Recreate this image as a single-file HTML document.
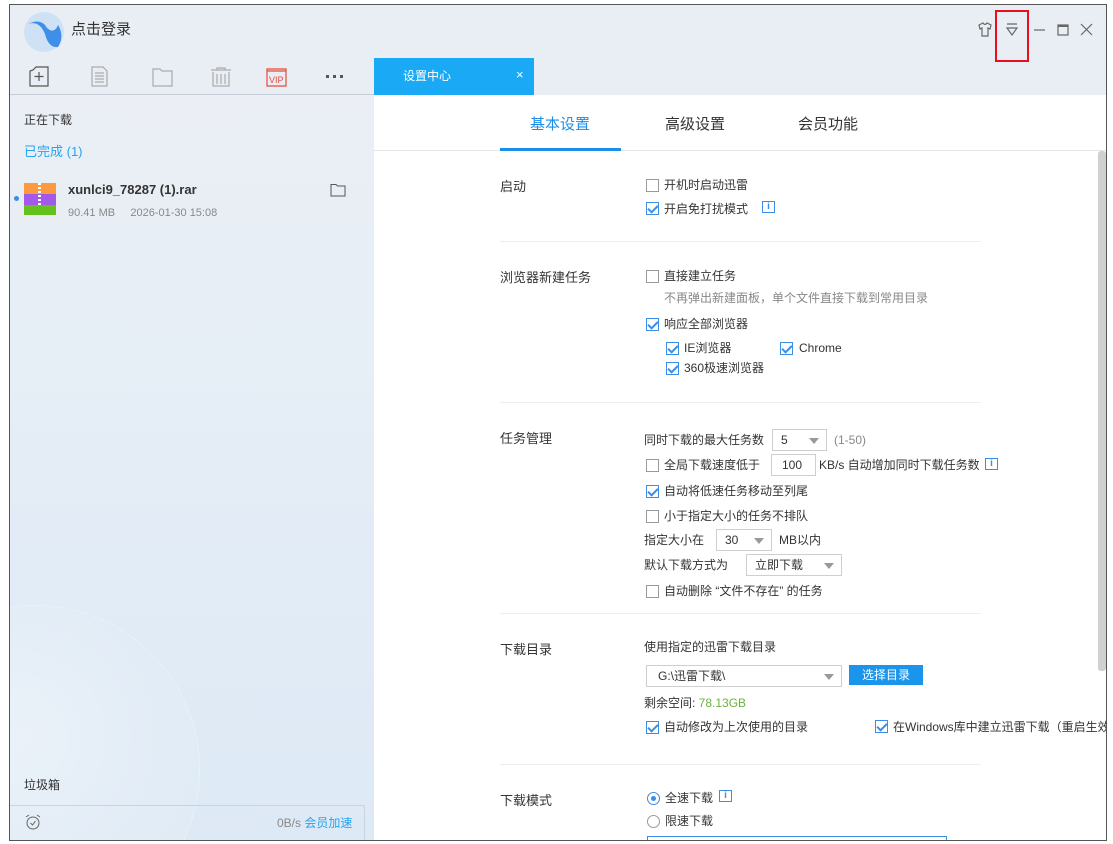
<!DOCTYPE html>
<html><head><meta charset="utf-8"><style>
*{margin:0;padding:0;box-sizing:border-box}
html,body{width:1113px;height:844px;overflow:hidden}
body{background:#fff;position:relative;font-family:"Liberation Sans","Noto Sans CJK SC",sans-serif;font-size:12px;color:#333}
.a{position:absolute;white-space:nowrap;line-height:16px}
.win{position:absolute;left:9px;top:4px;width:1098px;height:837px;border:1px solid #555;background:#fff;overflow:hidden}
.cb{position:absolute;width:13px;height:13px;border:1px solid #9a9a9a;background:#fff}
.cb.on{border-color:#3a8ee6}
.cb.on:after{content:"";position:absolute;left:3px;top:0px;width:4px;height:8px;border:solid #3a8ee6;border-width:0 2px 2px 0;transform:rotate(45deg)}
.sel{position:absolute;border:1px solid #cfcfcf;background:#fff;height:22px;line-height:20px;padding-left:8px}
.sel.dd:after{content:"";position:absolute;right:7px;top:8px;border:5px solid transparent;border-top:6px solid #999;border-bottom:0}
.info{position:absolute;width:13px;height:12px;border:1px solid #3a8ee6;color:#3a8ee6;font-size:10px;line-height:10px;text-align:center;font-weight:bold}
.hr{position:absolute;left:500px;width:481px;height:1px;background:#eee}
.h{position:absolute;font-size:13px;color:#333;line-height:16px}
</style></head><body>
<div class="win">
 <div style="position:absolute;left:0;top:0;width:1098px;height:90px;background:#e9eef4"></div>
 <div style="position:absolute;left:0;top:90px;width:364px;height:747px;background:linear-gradient(180deg,#ebeff5 0%,#e4edf6 50%,#dde9f5 100%)"></div>
 <div style="position:absolute;left:-140px;top:600px;width:330px;height:330px;border-radius:50%;background:radial-gradient(circle at 45% 40%,#eaf1f8,#e0ebf6 70%);border:1px solid #e8f0f8"></div>
 <div style="position:absolute;left:0;top:89px;width:364px;height:1px;background:#c5ccd6"></div>
 <div style="position:absolute;left:14px;top:7px;width:40px;height:40px;border-radius:50%;background:#cfe2f5"></div>
 <svg style="position:absolute;left:14px;top:7px" width="40" height="40"><path d="M4 12 C12 9 18 14 21 22 C23 30 27 36 34 35 C39 28 38 19 34 13 C31 21 25 20 21 13 C16 8 10 9 4 12Z" fill="#3f8ee8"/></svg>
 <div class="a" style="left:61px;top:17px;font-size:15px;color:#333">点击登录</div>
 <svg style="position:absolute;left:966px;top:16px" width="130" height="18" fill="none" stroke="#666" stroke-width="1.2">
  <path d="M3 4 L7 2 Q9 5 11 2 L15 4 L14 8 L12 7 L12 15 L6 15 L6 7 L4 8Z"/>
  <path d="M31 3 H41 M31 7 H41 L36 14 Z"/>
  <path d="M58 9 H69"/>
  <rect x="82" y="4" width="10" height="10"/><path d="M82 5 H92" stroke-width="2"/>
  <path d="M105 3 L116 14 M116 3 L105 14"/>
 </svg>
 <div style="position:absolute;left:985px;top:5px;width:34px;height:52px;border:2px solid #e8101e"></div>
 <svg style="position:absolute;left:18px;top:60px" width="340" height="24" fill="none" stroke-width="1.2">
  <g stroke="#555"><path d="M5 5 L8 2 H20 V21 H2 V6 Z"/><path d="M11 7 V16 M6.5 11.5 H15.5"/></g>
  <g stroke="#aaa"><path d="M64 2 H75 L79 6 V21 H64 Z M67 8 H76 M67 11 H76 M67 14 H76 M67 17 H76"/></g>
  <g stroke="#aaa"><path d="M125 4 H132 L134 6 H144 V21 H125 Z"/></g>
  <g stroke="#aaa"><path d="M183 5 H203 M189 5 V3 H197 V5 M185 7 V21 H201 V7 M189 9 V19 M193 9 V19 M197 9 V19"/></g>
  <g stroke="#e64a3b"><path d="M239 4 H258 V21 H239 Z M239 6 H258"/></g>
  <text x="241" y="18" fill="#e64a3b" font-size="9" stroke="none" font-family="Liberation Sans">VIP</text>
  <g fill="#555" stroke="none"><rect x="298" y="10" width="3" height="3"/><rect x="305" y="10" width="3" height="3"/><rect x="312" y="10" width="3" height="3"/></g>
 </svg>
 <div style="position:absolute;left:364px;top:53px;width:160px;height:37px;background:#19a9f5"></div>
 <div class="a" style="left:393px;top:63px;color:#fff">设置中心</div>
 <div class="a" style="left:506px;top:62px;color:#fff;font-size:13px">×</div>
 <div class="a" style="left:14px;top:107px">正在下载</div>
 <div class="a" style="left:14px;top:139px;color:#26a4f0;font-size:13px">已完成 (1)</div>
 <div style="position:absolute;left:4px;top:191px;width:5px;height:5px;border-radius:50%;background:#3a8ee6"></div>
 <div style="position:absolute;left:14px;top:178px;width:32px;height:11px;background:#fd9a3f"></div>
 <div style="position:absolute;left:14px;top:189px;width:32px;height:11px;background:#a45ae8"></div>
 <div style="position:absolute;left:14px;top:200px;width:32px;height:10px;background:#66c11c"></div>
 <div style="position:absolute;left:28px;top:178px;width:3px;height:22px;background:repeating-linear-gradient(#fff 0 2px,transparent 2px 4px)"></div>
 <div class="a" style="left:58px;top:177px;font-weight:bold;font-size:13px;color:#333">xunlci9_78287 (1).rar</div>
 <div class="a" style="left:58px;top:200px;font-size:11px;color:#888">90.41 MB &nbsp;&nbsp;&nbsp;&nbsp;2026-01-30 15:08</div>
 <svg style="position:absolute;left:320px;top:178px" width="16" height="14" fill="none" stroke="#555"><path d="M1 1.5 H6 L7.5 3 H15 V13 H1 Z"/></svg>
 <div class="a" style="left:14px;top:772px">垃圾箱</div>
 <div style="position:absolute;left:0;top:800px;width:354px;height:1px;background:#c8d4e0"></div>
 <div style="position:absolute;left:354px;top:800px;width:1px;height:37px;background:#c8d4e0"></div>
 <svg style="position:absolute;left:14px;top:808px" width="18" height="18" fill="none" stroke="#666"><circle cx="9" cy="10" r="6"/><path d="M6.5 10 L8.5 12 L11.5 8 M2 4 L5 2 M16 4 L13 2"/></svg>
 <div class="a" style="left:267px;top:810px;color:#888">0B/s <span style="color:#26a4f0">会员加速</span></div>
 <div class="a" style="left:520px;top:112px;font-size:15px;color:#1b8fe8">基本设置</div>
 <div class="a" style="left:655px;top:112px;font-size:15px">高级设置</div>
 <div class="a" style="left:788px;top:112px;font-size:15px">会员功能</div>
 <div style="position:absolute;left:364px;top:145px;width:734px;height:1px;background:#e5e5e5"></div>
 <div style="position:absolute;left:490px;top:143px;width:121px;height:3px;background:#1b8fe8"></div>
 <div style="position:absolute;left:1088px;top:146px;width:8px;height:520px;background:#d0d0d0;border-radius:3px"></div>

 <div style="position:absolute;left:-10px;top:-5px;width:1113px;height:844px">
<div class="h" style="left:500px;top:179px">启动</div>
<div class="cb" style="left:646px;top:179px"></div><div class="a" style="left:664px;top:177px">开机时启动迅雷</div>
<div class="cb on" style="left:646px;top:202px"></div><div class="a" style="left:664px;top:201px">开启免打扰模式</div>
<div class="info" style="left:762px;top:201px">i</div>
<div class="hr" style="top:241px"></div>
<div class="h" style="left:500px;top:270px">浏览器新建任务</div>
<div class="cb" style="left:646px;top:270px"></div><div class="a" style="left:664px;top:268px">直接建立任务</div>
<div class="a" style="left:664px;top:290px;color:#888">不再弹出新建面板，单个文件直接下载到常用目录</div>
<div class="cb on" style="left:646px;top:318px"></div><div class="a" style="left:664px;top:316px">响应全部浏览器</div>
<div class="cb on" style="left:666px;top:342px"></div><div class="a" style="left:684px;top:340px">IE浏览器</div>
<div class="cb on" style="left:780px;top:342px"></div><div class="a" style="left:799px;top:340px">Chrome</div>
<div class="cb on" style="left:666px;top:362px"></div><div class="a" style="left:684px;top:360px">360极速浏览器</div>
<div class="hr" style="top:402px"></div>
<div class="h" style="left:500px;top:431px">任务管理</div>
<div class="a" style="left:644px;top:432px">同时下载的最大任务数</div>
<div class="sel dd" style="left:772px;top:429px;width:55px">5</div>
<div class="a" style="left:834px;top:432px;color:#888">(1-50)</div>
<div class="cb" style="left:646px;top:459px"></div><div class="a" style="left:664px;top:457px">全局下载速度低于</div>
<div class="sel" style="left:771px;top:454px;width:45px;padding-left:10px">100</div>
<div class="a" style="left:819px;top:457px">KB/s 自动增加同时下载任务数</div>
<div class="info" style="left:985px;top:458px">i</div>
<div class="cb on" style="left:646px;top:485px"></div><div class="a" style="left:664px;top:483px">自动将低速任务移动至列尾</div>
<div class="cb" style="left:646px;top:510px"></div><div class="a" style="left:664px;top:508px">小于指定大小的任务不排队</div>
<div class="a" style="left:644px;top:532px">指定大小在</div>
<div class="sel dd" style="left:716px;top:529px;width:56px">30</div>
<div class="a" style="left:779px;top:532px">MB以内</div>
<div class="a" style="left:644px;top:557px">默认下载方式为</div>
<div class="sel dd" style="left:746px;top:554px;width:96px">立即下载</div>
<div class="cb" style="left:646px;top:585px"></div><div class="a" style="left:664px;top:583px">自动删除 “文件不存在” 的任务</div>
<div class="hr" style="top:613px"></div>
<div class="h" style="left:500px;top:642px">下载目录</div>
<div class="a" style="left:644px;top:639px">使用指定的迅雷下载目录</div>
<div class="sel dd" style="left:646px;top:665px;width:196px;padding-left:11px">G:\迅雷下载\</div>
<div style="position:absolute;left:849px;top:665px;width:74px;height:20px;background:#1b95ec;color:#fff;text-align:center;line-height:20px">选择目录</div>
<div class="a" style="left:644px;top:695px">剩余空间: <span style="color:#6cb33e">78.13GB</span></div>
<div class="cb on" style="left:646px;top:721px"></div><div class="a" style="left:664px;top:719px">自动修改为上次使用的目录</div>
<div class="cb on" style="left:875px;top:720px"></div><div class="a" style="left:893px;top:719px">在Windows库中建立迅雷下载（重启生效）</div>
<div class="hr" style="top:764px"></div>
<div class="h" style="left:500px;top:793px">下载模式</div>
<div style="position:absolute;left:647px;top:792px;width:13px;height:13px;border-radius:50%;border:1px solid #3a8ee6"></div>
<div style="position:absolute;left:651px;top:796px;width:5px;height:5px;border-radius:50%;background:#3a8ee6"></div>
<div class="a" style="left:665px;top:790px">全速下载</div>
<div class="info" style="left:719px;top:790px">i</div>
<div style="position:absolute;left:647px;top:815px;width:13px;height:13px;border-radius:50%;border:1px solid #999"></div>
<div class="a" style="left:665px;top:813px">限速下载</div>
<div style="position:absolute;left:647px;top:836px;width:300px;height:8px;border:1px solid #3a8ee6;border-bottom:0"></div>
 </div>
</div>
</body></html>
